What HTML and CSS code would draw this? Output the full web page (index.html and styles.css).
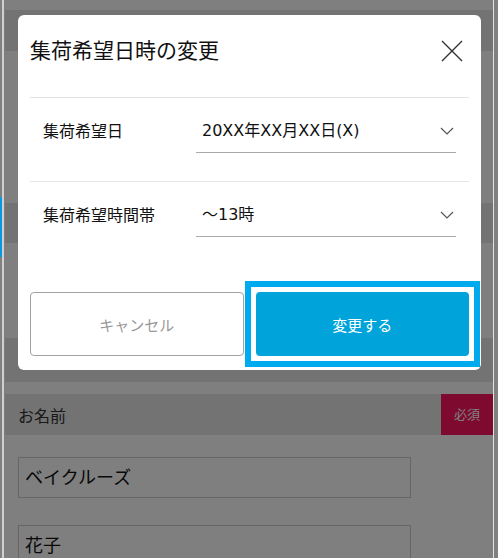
FILE: index.html
```html
<!DOCTYPE html>
<html lang="ja">
	<head>
		<meta charset="utf-8">
		<title>集荷希望日時の変更</title>
		<link rel="stylesheet" href="styles.css">
	</head>
	<body>
		<div class="edge"><div class="edge-mark"></div></div>
		<div class="page">
			<div class="band band-top"></div>
			<div class="gap gap-a"></div>
			<div class="band band-mid"></div>
			<div class="gap gap-b"></div>
			<div class="band band-low"></div>
			<div class="gap gap-c"></div>
			<div class="band field-head">
				<span class="field-name">お名前</span>
				<span class="required">必須</span>
			</div>
			<div class="field-body">
				<div class="text-box">ベイクルーズ</div>
				<div class="text-box">花子</div>
			</div>

			<div class="overlay"></div>

			<div class="modal">
				<div class="modal-head">
					<h1 class="modal-title">集荷希望日時の変更</h1>
					<span class="close">
						<svg width="22" height="22" viewBox="0 0 22 22"><path d="M1 1 L21 21 M21 1 L1 21" stroke="#333" stroke-width="1.4" fill="none"/></svg>
					</span>
				</div>
				<div class="row">
					<span class="row-label">集荷希望日</span>
					<div class="select">
						<span>20XX年XX月XX日(X)</span>
						<svg width="14" height="8" viewBox="0 0 14 8"><polyline points="1,1 7,7 13,1" stroke="#555" stroke-width="1.2" fill="none"/></svg>
					</div>
				</div>
				<div class="row row-last">
					<span class="row-label">集荷希望時間帯</span>
					<div class="select">
						<span>～13時</span>
						<svg width="14" height="8" viewBox="0 0 14 8"><polyline points="1,1 7,7 13,1" stroke="#555" stroke-width="1.2" fill="none"/></svg>
					</div>
				</div>
				<div class="actions">
					<button class="btn btn-cancel" type="button">キャンセル</button>
					<div class="focus-ring">
						<button class="btn btn-submit" type="button">変更する</button>
					</div>
				</div>
			</div>
		</div>
	</body>
</html>
```

FILE: styles.css
```css
body {
	margin: 0;
	display: flex;
	height: 558px;
	overflow: hidden;
	background-color: #808080;
	font-family: "DejaVu Sans", "Noto Sans CJK JP", sans-serif;
	color: #222;
}

.edge {
	width: 2px;
}

.edge-mark {
	margin-top: 197px;
	height: 60px;
	background-color: #0a98e0;
}

.page {
	position: relative;
	width: 489px;
	padding-top: 10px;
	background-color: #fff;
	border-left: 2px solid #cfcfcf;
	border-right: 1px solid #e2e2e2;
}

.band {
	background-color: #e6e6e6;
	margin-left: 1px;
}

.band-top {
	height: 41px;
}

.band-mid {
	height: 40px;
}

.band-low {
	height: 44px;
}

.gap-a {
	height: 152px;
}

.gap-b {
	height: 95px;
}

.gap-c {
	height: 12px;
}

.field-head {
	display: flex;
	align-items: center;
	justify-content: space-between;
	height: 41px;
}

.field-name {
	padding-left: 13px;
	font-size: 16px;
	color: #333;
}

.required {
	width: 52px;
	height: 41px;
	line-height: 41px;
	text-align: center;
	font-size: 13px;
	color: #fff;
	background-color: #ff1460;
}

.field-body {
	padding: 22px 0 0 14px;
}

.text-box {
	width: 385px;
	height: 39px;
	line-height: 39px;
	padding-left: 6px;
	margin-bottom: 27px;
	border: 1px solid #ccc;
	font-size: 18px;
	color: #111;
}

.overlay {
	position: absolute;
	top: 0;
	left: 0;
	right: 0;
	bottom: 0;
	background-color: rgba(0, 0, 0, 0.5);
}

.modal {
	position: absolute;
	top: 15px;
	left: 14px;
	width: 439px;
	padding: 0 12px 14px;
	background-color: #fff;
	border-radius: 6px;
}

.modal-head {
	display: flex;
	align-items: center;
	justify-content: space-between;
	padding: 21px 0 31px;
	border-bottom: 1px solid #e3e3e3;
}

.modal-title {
	margin: 0;
	font-size: 21px;
	font-weight: normal;
	line-height: 30px;
	color: #111;
}

.close {
	display: flex;
	margin-right: 6px;
}

.row {
	display: flex;
	align-items: flex-start;
	padding: 18px 13px 28px;
	border-bottom: 1px solid #e6e6e6;
}

.row-last {
	border-bottom: none;
	padding-bottom: 0;
}

.row-label {
	width: 153px;
	padding-top: 1px;
	font-size: 16px;
	line-height: 30px;
	color: #111;
}

.select {
	flex: 1;
	display: flex;
	align-items: center;
	justify-content: space-between;
	padding: 0 2px 6px 6px;
	font-size: 16px;
	line-height: 30px;
	color: #111;
	border-bottom: 1px solid #aaa;
}

.actions {
	display: grid;
	grid-template-columns: 1fr 1fr;
	gap: 12px;
	margin-top: 55px;
}

.btn {
	box-sizing: border-box;
	width: 100%;
	height: 64px;
	padding: 0;
	border-radius: 4px;
	font-family: "Noto Sans CJK JP", sans-serif;
	font-size: 15px;
	cursor: pointer;
}

.btn-cancel {
	background-color: #fff;
	border: 1px solid #a3a3a3;
	color: #999;
}

.focus-ring {
	outline: 6px solid #00aaef;
	outline-offset: 5px;
}

.btn-submit {
	display: block;
	border: none;
	background-color: #00a4db;
	color: #fff;
}
```
